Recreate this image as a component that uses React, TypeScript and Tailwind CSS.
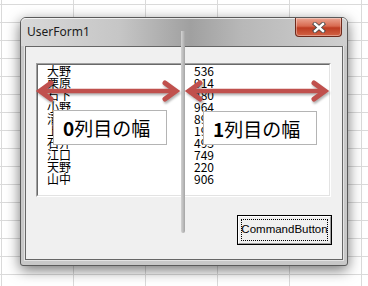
const rows: [string, string][] = [
  ["大野", "536"],
  ["栗原", "914"],
  ["石下", "480"],
  ["小野", "964"],
  ["清水", "893"],
  ["上田", "195"],
  ["石井", "493"],
  ["江口", "749"],
  ["天野", "220"],
  ["山中", "906"],
];

// 両端矢印（注釈用）
function DoubleArrow({ x1, x2, y }: { x1: number; x2: number; y: number }) {
  return (
    <g stroke="#c0504d" fill="none" strokeLinejoin="miter">
      <line x1={x1 + 3} y1={y} x2={x2 - 3} y2={y} strokeWidth={4.5} />
      <polyline
        points={`${x1 + 13},${y - 8} ${x1 + 2},${y} ${x1 + 13},${y + 8}`}
        strokeWidth={5}
        strokeLinecap="round"
      />
      <polyline
        points={`${x2 - 13},${y - 8} ${x2 - 2},${y} ${x2 - 13},${y + 8}`}
        strokeWidth={5}
        strokeLinecap="round"
      />
    </g>
  );
}

function WidthLabel({ n }: { n: string }) {
  return (
    <div className="flex h-full w-full items-center border border-[#b4b4b4] bg-white pl-[9px] font-['Noto_Sans_CJK_JP',sans-serif] text-[19px] font-normal leading-none text-black">
      <span className="font-bold">{n}</span>列目の幅
    </div>
  );
}

export default function App() {
  return (
    <div className="relative h-[286px] w-[368px] overflow-hidden bg-white bg-[linear-gradient(to_right,#dadada_1px,transparent_1px),linear-gradient(to_bottom,#dadada_1px,transparent_1px)] bg-[size:72px_18px] bg-[position:1px_4px]">
      {/* UserForm window */}
      <div className="absolute left-[20px] top-[17px] flex h-[249px] w-[328px] flex-col rounded-t-[6px] rounded-b-[3px] border border-[#5a5a5a] bg-[#c8c8c8] px-[4px] pb-[5px] shadow-[0_4px_14px_rgba(0,0,0,0.55)]">
        {/* title bar */}
        <div className="relative -mx-[4px] flex h-[28px] items-center rounded-t-[5px] bg-[linear-gradient(to_right,#d8d8d8_0%,#c6c6c6_30%,#a0a0a0_52%,#b8b8b8_68%,#cfcfcf_100%)] pl-[6px] shadow-[inset_0_1px_0_rgba(255,255,255,0.7)]">
          <span className="font-['Noto_Sans',sans-serif] text-[12px] leading-none text-[#1c1c1c]">UserForm1</span>
          <div className="absolute right-[5px] top-0 flex h-[19px] w-[47px] items-center justify-center rounded-b-[4px] border border-t-0 border-[#6e2a1c] bg-[linear-gradient(to_bottom,#eba592_0%,#d86a50_45%,#bd3c22_55%,#d26446_100%)] shadow-[inset_0_0_0_1px_rgba(255,255,255,0.35)]">
            <svg width="14" height="11" viewBox="0 0 14 11">
              <path d="M3 2 L11 9 M11 2 L3 9" stroke="#4a4a4a" strokeWidth="4.2" strokeLinecap="square" />
              <path d="M3 2 L11 9 M11 2 L3 9" stroke="#ffffff" strokeWidth="2.4" strokeLinecap="square" />
            </svg>
          </div>
        </div>

        {/* client area */}
        <div className="flex flex-1 flex-col border border-[#666666] bg-[#f0f0f0] shadow-[0_0_0_1px_rgba(255,255,255,0.5)]">
          <div className="ml-[10px] mt-[16px] h-[134px] w-[295px] border border-b-white border-l-[#a0a0a0] border-r-white border-t-[#a0a0a0]">
            <div className="h-full w-full border border-b-[#e3e3e3] border-l-[#696969] border-r-[#e3e3e3] border-t-[#696969] bg-white pl-[9px]">
              {rows.map(([name, val]) => (
                <div key={name + val} className="flex h-[12px] font-['Noto_Sans_CJK_JP',sans-serif] text-[12px] leading-[12px] text-black">
                  <span className="w-[147px]">{name}</span>
                  <span>{val}</span>
                </div>
              ))}
            </div>
          </div>

          <div className="mr-[10px] mt-[18px] flex justify-end">
            <button className="h-[30px] w-[95px] border border-black bg-[#f0f0f0] p-0">
              <div className="h-full w-full border border-b-[#a0a0a0] border-l-white border-r-[#a0a0a0] border-t-white p-[2px]">
                <div className="flex h-full w-full items-center justify-center border border-dotted border-black font-['Liberation_Sans',sans-serif] text-[11.5px] leading-none text-black">
                  CommandButton
                </div>
              </div>
            </button>
          </div>
        </div>
      </div>

      {/* column divider guide */}
      <div className="absolute left-[181px] top-[31px] h-[202px] w-[4px] rounded-b-[2px] bg-[linear-gradient(to_right,#d2d2d2,#bdbdbd_50%,#a4a4a4)]" />

      {/* arrows */}
      <svg
        className="absolute left-0 top-0 drop-shadow-[1px_2px_1px_rgba(0,0,0,0.3)]"
        width="368"
        height="286"
        viewBox="0 0 368 286"
      >
        <DoubleArrow x1={38} x2={178} y={91} />
        <DoubleArrow x1={187} x2={327} y={91} />
      </svg>

      {/* labels */}
      <div className="absolute left-[53px] top-[110px] h-[35px] w-[114px]">
        <WidthLabel n="0" />
      </div>
      <div className="absolute left-[203px] top-[111px] h-[34px] w-[114px]">
        <WidthLabel n="1" />
      </div>
    </div>
  );
}
